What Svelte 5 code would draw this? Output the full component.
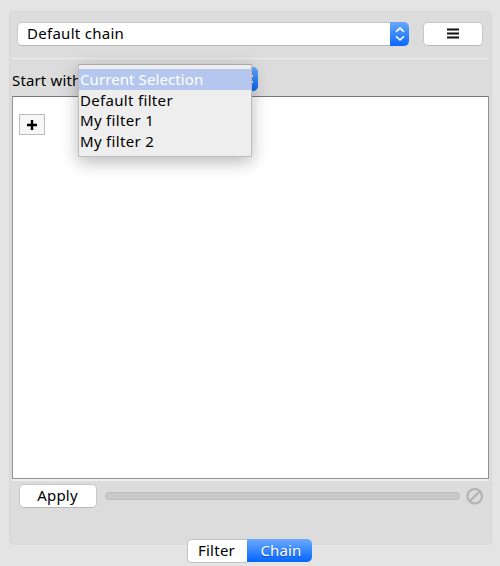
<script>
  const options = ['Current Selection', 'Default filter', 'My filter 1', 'My filter 2'];
  let selected = $state(0);
  let tab = $state('Chain');
</script>

{#snippet arrows()}
  <svg class="arrows" width="12" height="16" viewBox="0 0 12 16">
    <path d="M2.1 5.7 6 2.1l3.9 3.6M2.1 10.4 6 14l3.9-3.6" fill="none" stroke="#fff" stroke-width="1.6" />
  </svg>
{/snippet}

<div class="window">
  <section class="panel">
    <header class="toolbar">
      <div class="combo">
        <span class="value">Default chain</span>
        <span class="knob">{@render arrows()}</span>
      </div>
      <button class="button menu-button" aria-label="Menu">
        <svg width="12" height="11" viewBox="0 0 12 11">
          <path d="M0 1.5h12M0 5.5h12M0 9.5h12" stroke="#111" stroke-width="2" />
        </svg>
      </button>
    </header>
    <div class="rule"></div>
    <div class="start">
      <span class="label">Start with</span>
      <div class="picker">
        <span class="knob">{@render arrows()}</span>
        <ul class="popup">
          {#each options as option, i}
            <li class:selected={i === selected}>{option}</li>
          {/each}
        </ul>
      </div>
    </div>
    <div class="canvas">
      <button class="add" aria-label="Add">
        <svg width="10" height="10" viewBox="0 0 10 10"><path d="M5 0v10M0 5h10" stroke="#000" stroke-width="2.4" /></svg>
      </button>
    </div>
    <footer class="actions">
      <button class="button apply">Apply</button>
      <div class="progress"></div>
      <svg class="cancel" width="18" height="18" viewBox="0 0 18 18">
        <circle cx="8.7" cy="9.3" r="7.3" fill="none" stroke="#b3b3b3" stroke-width="2.2" />
        <path d="M3.6 14.4 13.8 4.2" stroke="#b3b3b3" stroke-width="2.2" />
      </svg>
    </footer>
  </section>
  <nav class="tabs">
    <button class="tab filter" class:active={tab === 'Filter'}>Filter</button>
    <button class="tab chain" class:active={tab === 'Chain'}>Chain</button>
  </nav>
</div>

<style>
  :global(body) { margin: 0; background: #e4e4e4; }
  .window {
    box-sizing: border-box;
    height: 566px;
    padding: 11px 9px 0;
    overflow: hidden;
    background: #e4e4e4;
    color: #000;
    font: 15px/20px 'Noto Sans', 'Open Sans', sans-serif;
    white-space: nowrap;
  }
  button { font: inherit; color: inherit; padding: 0; margin: 0; }
  .panel {
    box-sizing: border-box;
    width: 483px;
    height: 534px;
    padding: 10px 2px 0;
    border: 1px solid #d7d7d7;
    border-bottom-color: #dadada;
    border-radius: 5px;
    background: #dcdcdc;
  }
  .toolbar { display: flex; justify-content: space-between; padding: 0 6px 0 5px; }
  .combo {
    display: flex;
    align-items: center;
    box-sizing: border-box;
    width: 392px;
    height: 24px;
    border: 1px solid #c8c8c8;
    border-bottom-color: #b8b8b8;
    border-right: 0;
    border-radius: 5px;
    background: #fff;
  }
  .value { flex: 1; padding: 0 0 2px 9px; letter-spacing: 0.28px; }
  .knob {
    display: flex;
    align-items: center;
    justify-content: center;
    box-sizing: border-box;
    width: 19px;
    height: 24px;
    border-radius: 0 5px 5px 0;
    background: linear-gradient(#6aa9fb, #0a67fd);
  }
  .button {
    display: flex;
    align-items: center;
    justify-content: center;
    box-sizing: border-box;
    border: 1px solid #c8c8c8;
    border-bottom-color: #b8b8b8;
    border-radius: 5px;
    background: #fff;
  }
  .menu-button { width: 60px; height: 24px; }
  .menu-button svg { margin-bottom: 1px; }
  .rule { height: 1px; margin: 12px 1px 0 0; background: #efefef; }
  .start { display: flex; height: 37px; padding-top: 1px; box-sizing: border-box; }
  .label { width: 66px; padding-top: 10px; letter-spacing: 0.15px; }
  .picker { position: relative; display: flex; justify-content: flex-end; width: 180px; padding-top: 7px; }
  .popup {
    position: absolute;
    z-index: 2;
    top: 4px;
    left: 0;
    box-sizing: border-box;
    width: 174px;
    height: 93px;
    margin: 0;
    padding: 4px 0;
    list-style: none;
    background: #eee;
    border: 1px solid #bdbdbd;
    border-top-color: #a8a8a8;
    box-shadow: 0 5px 16px rgba(0, 0, 0, 0.28);
  }
  .popup li {
    height: 20.7px;
    padding-left: 1px;
    line-height: 21px;
    letter-spacing: 0.32px;
  }
  .popup .selected { background: #b5c7ee; color: #fff; letter-spacing: 0.09px; }
  .canvas {
    box-sizing: border-box;
    height: 383px;
    padding: 17px 0 0 6px;
    border: 1px solid #929292;
    border-top-color: #777;
    background: #fff;
    box-shadow: 0 2px 0 #eee;
  }
  .add {
    display: flex;
    align-items: center;
    justify-content: center;
    box-sizing: border-box;
    width: 26px;
    height: 21px;
    border: 1px solid #bcbcbc;
    background: #f7f7f7;
  }
  .actions { display: flex; align-items: center; padding: 5px 5px 0 7px; }
  .apply { width: 78px; height: 24px; padding: 0 1px 2px 0; letter-spacing: 0.2px; }
  .progress {
    box-sizing: border-box;
    flex: 1;
    height: 8px;
    margin: 0 6px 0 8px;
    border: 1px solid #bcbcbc;
    border-radius: 4px;
    background: #c9c9c9;
  }
  .tabs { display: flex; width: 125px; margin: -6px 0 0 178px; position: relative; }
  .tab {
    box-sizing: border-box;
    height: 24px;
    padding-bottom: 2px;
    border: 1px solid #c2c2c2;
    background: #fff;
  }
  .filter { width: 60px; padding-right: 2px; letter-spacing: 0.25px; border-right: 0; border-radius: 5px 0 0 5px; }
  .chain { width: 65px; padding-left: 3px; border-radius: 0 5px 5px 0; letter-spacing: 0.15px; }
  .active {
    height: 23px;
    border: 0;
    background: linear-gradient(#6aaafc, #0565ff);
    color: #fff;
    text-shadow: 0 1px 1px rgba(0, 40, 130, 0.5);
  }
</style>
